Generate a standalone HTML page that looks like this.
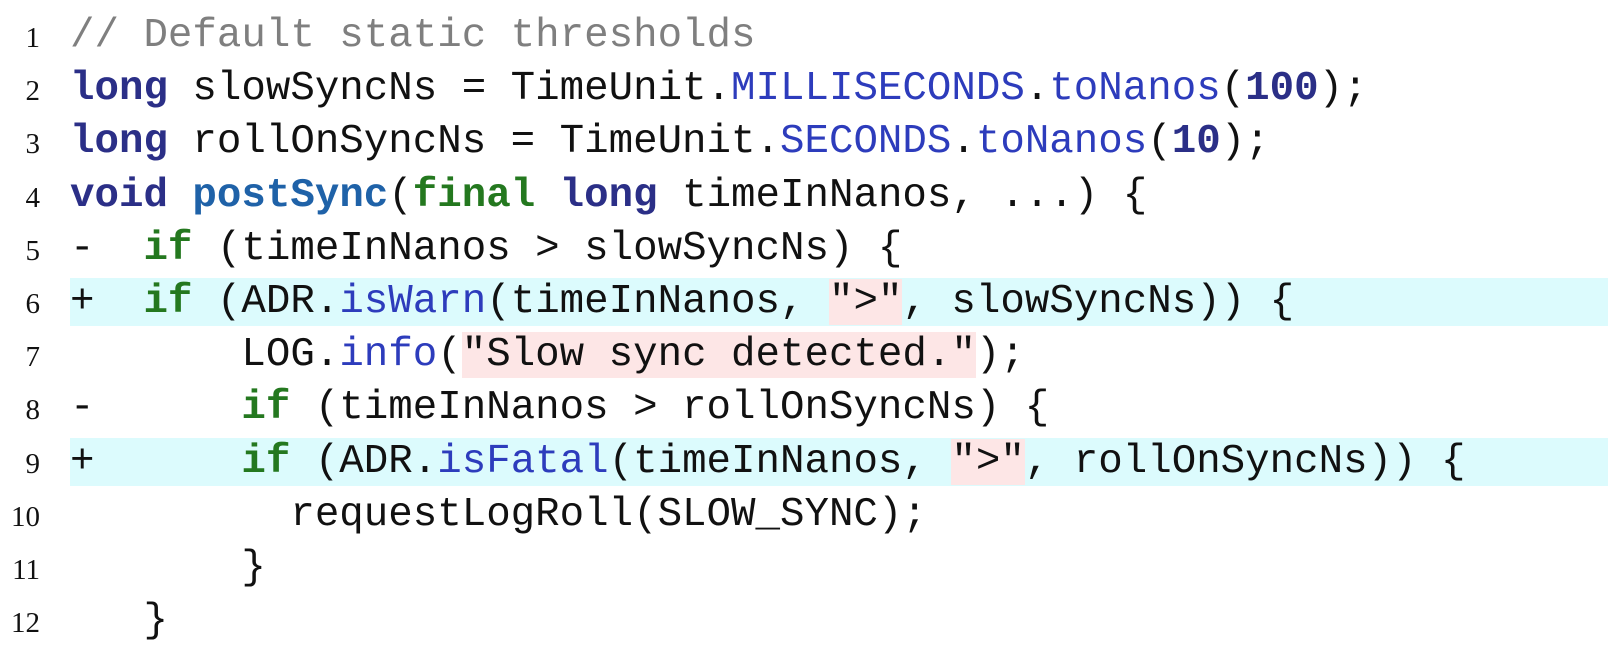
<!DOCTYPE html>
<html><head><meta charset="utf-8"><style>
body{margin:0;background:#fff;width:1624px;height:654px;overflow:hidden}
.l{position:absolute;left:0;height:53.2px;width:1624px}
.n{position:absolute;right:1584px;font-family:"Liberation Serif",serif;font-size:29px;top:12px;color:#111}
.c{position:absolute;left:70px;top:0;font-family:"Liberation Mono",monospace;font-size:40.8px;line-height:53.2px;white-space:pre;color:#111}
.hl{position:absolute;left:70px;width:1538px;top:2px;height:48px;background:#dcfbfd}
.s{background:#fde6e6}
.k{color:#2b2f87;font-weight:bold}
.f{color:#1f62a8;font-weight:bold}
.g{color:#24781f;font-weight:bold}
.b{color:#2d3cbc}
.cm{color:#7f7f7f}
</style></head><body>
<div class="l" style="top:10px"><span class="n">1</span><span class="c"><span class="cm">// Default static thresholds</span></span></div>
<div class="l" style="top:63.2px"><span class="n">2</span><span class="c"><span class="k">long</span> slowSyncNs = TimeUnit.<span class="b">MILLISECONDS</span>.<span class="b">toNanos</span>(<span class="k">100</span>);</span></div>
<div class="l" style="top:116.4px"><span class="n">3</span><span class="c"><span class="k">long</span> rollOnSyncNs = TimeUnit.<span class="b">SECONDS</span>.<span class="b">toNanos</span>(<span class="k">10</span>);</span></div>
<div class="l" style="top:169.6px"><span class="n">4</span><span class="c"><span class="k">void</span> <span class="f">postSync</span>(<span class="g">final</span> <span class="k">long</span> timeInNanos, ...) {</span></div>
<div class="l" style="top:222.8px"><span class="n">5</span><span class="c">-  <span class="g">if</span> (timeInNanos &gt; slowSyncNs) {</span></div>
<div class="l" style="top:276px"><div class="hl"></div><span class="n">6</span><span class="c">+  <span class="g">if</span> (ADR.<span class="b">isWarn</span>(timeInNanos, <span class="s">"&gt;"</span>, slowSyncNs)) {</span></div>
<div class="l" style="top:329.2px"><span class="n">7</span><span class="c">       LOG.<span class="b">info</span>(<span class="s">"Slow sync detected."</span>);</span></div>
<div class="l" style="top:382.4px"><span class="n">8</span><span class="c">-      <span class="g">if</span> (timeInNanos &gt; rollOnSyncNs) {</span></div>
<div class="l" style="top:435.6px"><div class="hl"></div><span class="n">9</span><span class="c">+      <span class="g">if</span> (ADR.<span class="b">isFatal</span>(timeInNanos, <span class="s">"&gt;"</span>, rollOnSyncNs)) {</span></div>
<div class="l" style="top:488.8px"><span class="n">10</span><span class="c">         requestLogRoll(SLOW_SYNC);</span></div>
<div class="l" style="top:542px"><span class="n">11</span><span class="c">       }</span></div>
<div class="l" style="top:595.2px"><span class="n">12</span><span class="c">   }</span></div>
</body></html>
